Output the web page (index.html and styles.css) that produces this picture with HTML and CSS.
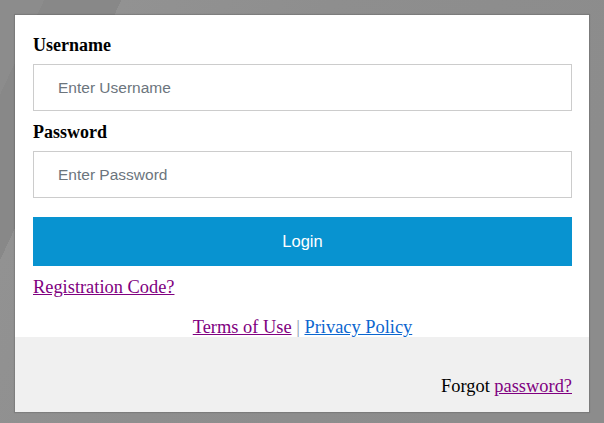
FILE: index.html
```html
<!DOCTYPE html>
<html lang="en">
<head>
<meta charset="utf-8">
<title>Login</title>
<link rel="stylesheet" href="styles.css">
</head>
<body>
<div class="card">
  <form class="form">
    <label class="label" for="u">Username</label>
    <input class="field" id="u" type="text" placeholder="Enter Username">
    <label class="label" for="p">Password</label>
    <input class="field" id="p" type="password" placeholder="Enter Password">
    <button class="btn" type="button">Login</button>
    <div class="reg"><a class="visited" href="#reg">Registration Code?</a></div>
    <div class="terms"><a class="visited" href="#terms">Terms of Use</a> <span class="sep">|</span> <a class="plain" href="#privacy">Privacy Policy</a></div>
  </form>
  <div class="footer">Forgot <a class="visited" href="#forgot">password?</a></div>
</div>
</body>
</html>
```

FILE: styles.css
```css
html, body {
  margin: 0;
  padding: 0;
}
body {
  width: 604px;
  height: 423px;
  padding: 15px;
  box-sizing: border-box;
  background-color: #8c8c8c;
  background-image: linear-gradient(115deg, #8c8c8c 0px, #8c8c8c 40px, #888888 40px, #888888 110px, #929292 110px, #8e8e8e 300px, #8c8c8c 600px);
  font-family: "Liberation Serif", "Times New Roman", serif;
  overflow: hidden;
}
.card {
  width: 574px;
  background: #fff;
  box-shadow: 0 0 1px 1px rgba(0,0,0,0.12);
}
.form {
  padding: 20px 17px 0 18px;
  display: flex;
  flex-direction: column;
  margin: 0;
}
.label {
  font-weight: bold;
  font-size: 18px;
  line-height: 20px;
  color: #000;
  margin-bottom: 9px;
}
.field {
  height: 47px;
  box-sizing: border-box;
  border: 1px solid #cccccc;
  padding: 0 24px;
  font-family: "Liberation Sans", Arial, sans-serif;
  font-size: 15.5px;
  color: #333;
  outline: none;
  margin: 0 0 11px 0;
  background: #fff;
}
.field::placeholder {
  color: #6c757d;
  opacity: 1;
}
#p {
  margin-bottom: 19px;
}
.btn {
  height: 49px;
  border: none;
  background: #0893d0;
  color: #fff;
  font-family: "Liberation Sans", Arial, sans-serif;
  font-size: 16.5px;
  padding: 0;
  margin: 0;
  cursor: pointer;
}
.reg {
  margin-top: 11px;
  font-size: 18.4px;
  line-height: 21px;
}
.terms {
  margin-top: 19px;
  font-size: 18.4px;
  line-height: 20px;
  text-align: center;
}
.visited {
  color: #800080;
}
.plain {
  color: #0b66cf;
}
.sep {
  color: #8a9bb0;
}
.footer {
  background: #f0f0f0;
  padding: 39px 17px 15px 0;
  text-align: right;
  font-size: 18.4px;
  line-height: 21px;
  color: #000;
}
```
